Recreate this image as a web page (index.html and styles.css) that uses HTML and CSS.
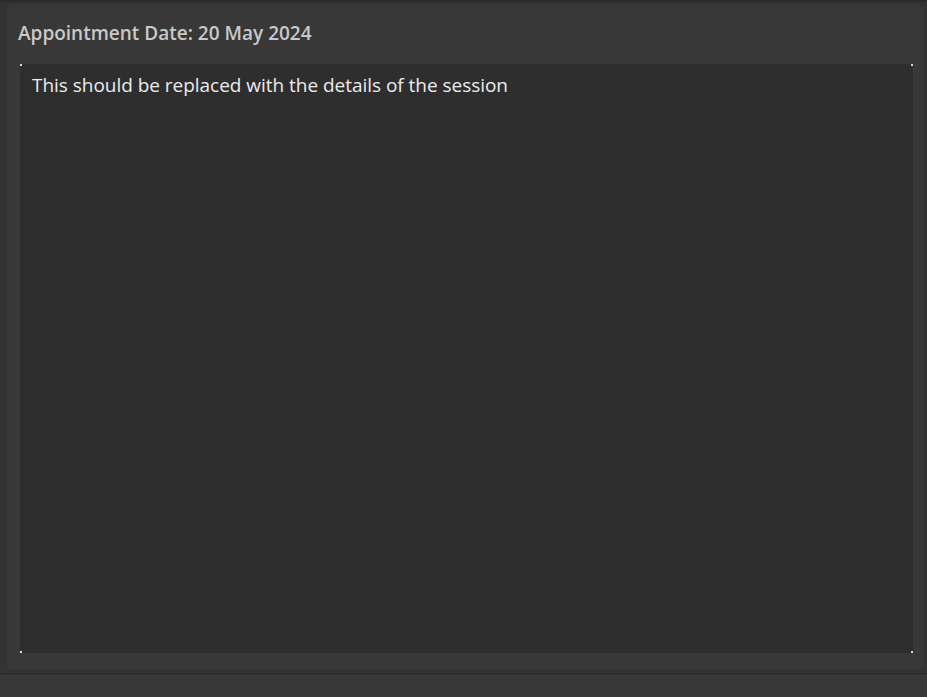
FILE: index.html
```
<!DOCTYPE html>
<html>
<head>
<meta charset="utf-8">
<link rel="stylesheet" href="styles.css">
</head>
<body>
<div class="top-line"></div>
<div class="wrap">
  <section class="card">
    <h1 class="title">Appointment Date: 20 May 2024</h1>
    <div class="details">
      <span class="dot tl"></span><span class="dot tr"></span><span class="dot bl"></span><span class="dot br"></span>
      <p class="details-text">This should be replaced with the details of the session</p>
    </div>
  </section>
</div>
<div class="footer"></div>
</body>
</html>
```
FILE: styles.css
```
html, body {
  margin: 0;
  padding: 0;
  height: 100%;
}
body {
  background: #333333;
  font-family: "Open Sans", "Noto Sans", sans-serif;
  display: flex;
  flex-direction: column;
}
.top-line {
  height: 2px;
  background: #2b2b2b;
}
.wrap {
  padding: 1px 2px 0 5px;
  height: 669px;
  box-sizing: border-box;
}
.card {
  height: 100%;
  box-sizing: border-box;
  background: #383838;
  border: 1px solid #2f2f2f;
  border-radius: 8px;
  padding: 0 11px 13px 14px;
  display: flex;
  flex-direction: column;
}
.title {
  margin: 0 0 0 -2px;
  height: 60px;
  box-sizing: border-box;
  padding: 16px 0 0 0;
  font-size: 19px;
  font-weight: 600;
  color: #c9c9c9;
}
.details {
  position: relative;
  flex: 1;
  margin-bottom: 4px;
  background: #2e2e2e;
}
.details-text {
  margin: 0;
  padding: 8px 12px;
  font-size: 19px;
  color: #ececec;
  letter-spacing: -0.03px;
}
.dot {
  position: absolute;
  width: 2px;
  height: 2px;
  background: #d8d8d8;
}
.tl { left: 0; top: 0; }
.tr { right: 0; top: 0; }
.bl { left: 0; bottom: 0; }
.br { right: 0; bottom: 0; }
.footer {
  flex: 1;
  border-top: 2px solid #2c2c2c;
  margin-top: 2px;
  background: #383838;
}
```
